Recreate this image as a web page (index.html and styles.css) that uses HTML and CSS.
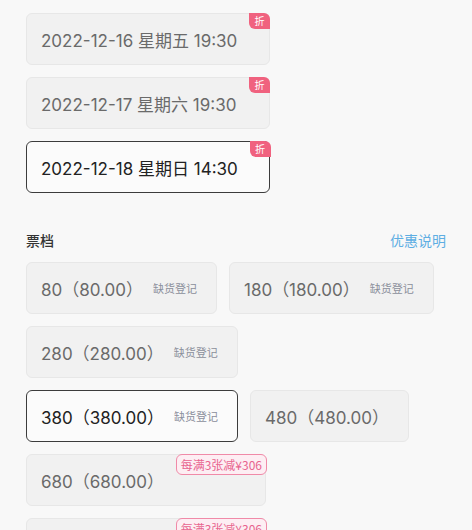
FILE: index.html
```html
<!DOCTYPE html>
<html lang="zh">
<head>
<meta charset="utf-8">
<link rel="stylesheet" href="styles.css">
</head>
<body>
<div class="page">
  <div class="dates">
    <div class="opt date">2022-12-16 星期五 19:30<span class="zhe">折</span></div>
    <div class="opt date">2022-12-17 星期六 19:30<span class="zhe">折</span></div>
    <div class="opt date selected">2022-12-18 星期日 14:30<span class="zhe">折</span></div>
  </div>

  <div class="section-head">
    <span class="title">票档</span>
    <span class="link">优惠说明</span>
  </div>

  <div class="prices">
    <div class="opt price">80（80.00）<span class="oos">缺货登记</span></div>
    <div class="opt price">180（180.00）<span class="oos">缺货登记</span></div>
    <div class="opt price">280（280.00）<span class="oos">缺货登记</span></div>
    <div class="opt price selected">380（380.00）<span class="oos">缺货登记</span></div>
    <div class="opt price">480（480.00）</div>
    <div class="opt price tagged">680（680.00）<span class="promo">每满3张减¥306</span></div>
    <div class="opt price tagged">880（880.00）<span class="promo">每满3张减¥306</span></div>
  </div>
</div>
</body>
</html>
```

FILE: styles.css
```css
html, body {
  margin: 0;
  padding: 0;
  background: #f8f8f8;
}
body {
  font-family: Inter, "Noto Sans CJK SC", sans-serif;
  overflow: hidden;
  height: 530px;
}
.page {
  padding: 13px 26px 0 26px;
}
.dates {
  display: flex;
  flex-direction: column;
  align-items: flex-start;
  gap: 12px;
}
.opt {
  position: relative;
  box-sizing: border-box;
  height: 52px;
  display: inline-flex;
  align-items: center;
  background: #f1f1f1;
  border: 1px solid #e7e7e7;
  border-radius: 6px;
  color: #6a6a6a;
  font-size: 17px;
  white-space: nowrap;
}
.opt.selected {
  background: #fbfbfb;
  border: 1.5px solid #3c3c3c;
  color: #222;
}
.date {
  width: 244px;
  padding: 0 0 0 14px;
}
.zhe {
  position: absolute;
  top: -1px;
  right: -1px;
  width: 21px;
  height: 16px;
  background: #f0627f;
  color: #fff;
  font-family: "Noto Sans CJK SC", sans-serif;
  font-size: 10px;
  line-height: 16px;
  text-align: center;
  border-radius: 0 6px 0 6px;
}
.selected .zhe {
  top: -1.5px;
  right: -1.5px;
}
.section-head {
  margin-top: 37px;
  display: flex;
  justify-content: space-between;
  align-items: center;
  height: 20px;
}
.title {
  font-family: "Noto Sans CJK SC", sans-serif;
  font-size: 14px;
  font-weight: 500;
  color: #333;
}
.link {
  font-family: "Noto Sans CJK SC", sans-serif;
  font-size: 14px;
  color: #5eaee3;
}
.prices {
  margin-top: 12px;
  display: flex;
  flex-wrap: wrap;
  gap: 12px;
}
.price {
  padding: 0 19px 0 14px;
}
.oos {
  font-family: "Noto Sans CJK SC", sans-serif;
  font-size: 11px;
  color: #8b8f9b;
  margin-left: 10px;
}
.price.tagged {
  width: 240px;
}
.promo {
  position: absolute;
  top: -1px;
  right: -2px;
  box-sizing: border-box;
  height: 21px;
  padding: 0 4px;
  border: 1px solid #f08aa8;
  background: #fdeef3;
  color: #e8648f;
  font-family: "Noto Sans CJK SC", sans-serif;
  font-size: 12px;
  line-height: 19px;
  border-radius: 6px;
}
```
